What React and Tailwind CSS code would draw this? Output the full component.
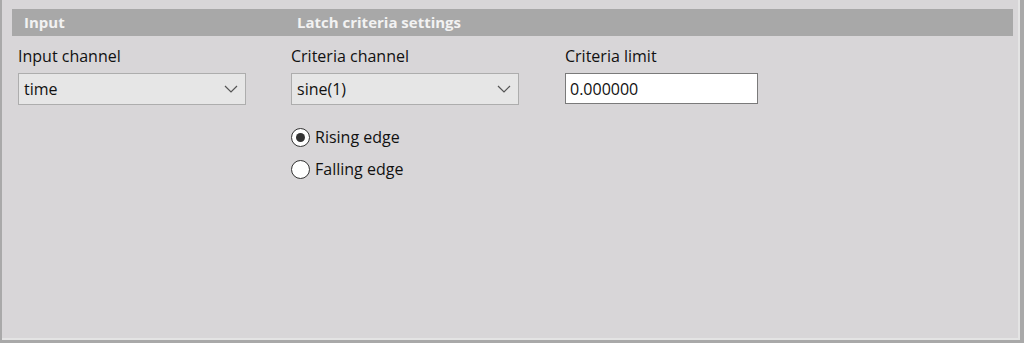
import { useState } from 'react';

function Chevron() {
  return (
    <svg width="14" height="8" viewBox="0 0 14 8" className="shrink-0">
      <path d="M1 1 L7 7 L13 1" fill="none" stroke="#555" strokeWidth="1.2" />
    </svg>
  );
}

function Select({ value }) {
  return (
    <div className="flex h-[32px] w-[228px] items-center justify-between border border-[#adadad] bg-[#e6e6e6] pl-[5px] pr-[7px] text-[16px] text-[#111]">
      <span>{value}</span>
      <Chevron />
    </div>
  );
}

function Radio({ label, checked, onClick }) {
  return (
    <div className="flex h-[32px] cursor-default items-center gap-[5px]" onClick={onClick}>
      <span className="flex h-[19px] w-[19px] items-center justify-center rounded-full border-[1.5px] border-[#333] bg-white">
        {checked && <span className="h-[9px] w-[9px] rounded-full bg-[#333]" />}
      </span>
      <span className="text-[16px] text-[#111]">{label}</span>
    </div>
  );
}

export default function App() {
  const [edge, setEdge] = useState('rising');

  return (
    <div
      className="h-[343px] w-[1024px] overflow-hidden bg-[#d8d6d8]"
      style={{ fontFamily: '"Open Sans", "Noto Sans", sans-serif' }}
    >
      <div className="h-full w-full border-b-[3px] border-l-2 border-r-[4px] border-[#a9a9a9]">
        <div className="h-full w-full border-b-2 border-r-2 border-[#e4e4e4] pt-[9px]">
          {/* Header bar */}
          <div className="ml-[10px] mr-[5px] flex h-[27px] items-center bg-[#a8a8a8] text-[15px] font-bold text-[#f2f2f2]">
            <span className="w-[285px] pl-[12px]">Input</span>
            <span>Latch criteria settings</span>
          </div>

          <div className="flex pt-[8px]">
            {/* Input column */}
            <div className="ml-[16px] flex w-[273px] flex-col">
              <label className="h-[25px] text-[16px] text-[#111]">Input channel</label>
              <div className="mt-[4px]">
                <Select value="time" />
              </div>
            </div>

            {/* Criteria channel column */}
            <div className="flex w-[274px] flex-col">
              <label className="h-[25px] text-[16px] text-[#111]">Criteria channel</label>
              <div className="mt-[4px]">
                <Select value="sine(1)" />
              </div>
              <div className="mt-[16px] flex flex-col">
                <Radio label="Rising edge" checked={edge === 'rising'} onClick={() => setEdge('rising')} />
                <Radio label="Falling edge" checked={edge === 'falling'} onClick={() => setEdge('falling')} />
              </div>
            </div>

            {/* Criteria limit column */}
            <div className="flex flex-col">
              <label className="h-[25px] text-[16px] text-[#111]">Criteria limit</label>
              <div className="mt-[4px]">
                <input
                  defaultValue="0.000000"
                  className="h-[31px] w-[193px] border border-[#7a7a7a] bg-white px-[4px] text-[16px] text-[#111] outline-none"
                />
              </div>
            </div>
          </div>
        </div>
      </div>
    </div>
  );
}
